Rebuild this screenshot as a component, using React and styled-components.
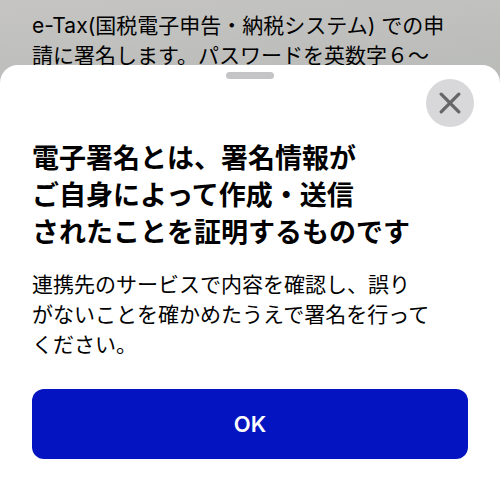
import React, { useState } from 'react';
import styled, { createGlobalStyle } from 'styled-components';

const GlobalStyle = createGlobalStyle`
  * {
    box-sizing: border-box;
  }
  html,
  body,
  #root {
    height: 100%;
  }
  body {
    margin: 0;
    background: #bbbdbb;
    color: #000;
    font-family: Inter, 'Noto Sans CJK JP', sans-serif;
  }
`;

const Screen = styled.div`
  display: flex;
  flex-direction: column;
  min-height: 100%;
`;

const Backdrop = styled.main`
  padding: 11px 32px 12px;
  background: linear-gradient(175deg, #c5c4c2, #b9bbb8);
`;

const Text = styled.p`
  margin: 0;
  font-size: 21px;
  line-height: 30px;
  white-space: pre-line;
`;

const Sheet = styled.section`
  position: relative;
  flex: 1;
  margin-top: -18px;
  padding: 7px 32px 44px;
  background: #fff;
  border-radius: 18px 18px 0 0;
`;

const Grabber = styled.div`
  width: 48px;
  height: 7px;
  margin: 0 auto;
  border-radius: 4px;
  background: #c4c4c6;
`;

const CloseButton = styled.button`
  position: absolute;
  top: 14px;
  right: 26px;
  display: flex;
  align-items: center;
  justify-content: center;
  width: 48px;
  height: 48px;
  padding: 0;
  border: none;
  border-radius: 50%;
  background: #d8d8da;
  color: #666668;
  cursor: pointer;
`;

const Title = styled.h1`
  margin: 61px 0 19px;
  font-size: 27px;
  font-weight: 700;
  line-height: 37px;
  white-space: pre-line;
`;

const OkButton = styled.button`
  display: block;
  width: 100%;
  height: 70px;
  margin-top: 29px;
  border: none;
  border-radius: 12px;
  background: #0414c0;
  color: #fff;
  font-family: inherit;
  font-size: 22px;
  font-weight: 600;
  cursor: pointer;
`;

function CloseIcon() {
  return (
    <svg width="22" height="22" viewBox="0 0 22 22" aria-hidden="true">
      <path d="M2.2 2.2L19.8 19.8M19.8 2.2L2.2 19.8" stroke="currentColor" strokeWidth="3.3" strokeLinecap="round" />
    </svg>
  );
}

const App = () => {
  const [open, setOpen] = useState(true);

  const handleClose = () => setOpen(false);

  return (
    <>
      <GlobalStyle />
      <Screen>
        <Backdrop>
          <Text>{'e-Tax(国税電子申告・納税システム) での申\n請に署名します。パスワードを英数字６〜'}</Text>
        </Backdrop>
        {open && (
          <Sheet role="dialog" aria-labelledby="sheet-title">
            <Grabber />
            <CloseButton type="button" aria-label="閉じる" onClick={handleClose}>
              <CloseIcon />
            </CloseButton>
            <Title id="sheet-title">{'電子署名とは、署名情報が\nご自身によって作成・送信\nされたことを証明するものです'}</Title>
            <Text>{'連携先のサービスで内容を確認し、誤り\nがないことを確かめたうえで署名を行って\nください。'}</Text>
            <OkButton type="button" onClick={handleClose}>OK</OkButton>
          </Sheet>
        )}
      </Screen>
    </>
  );
};

export default App;
